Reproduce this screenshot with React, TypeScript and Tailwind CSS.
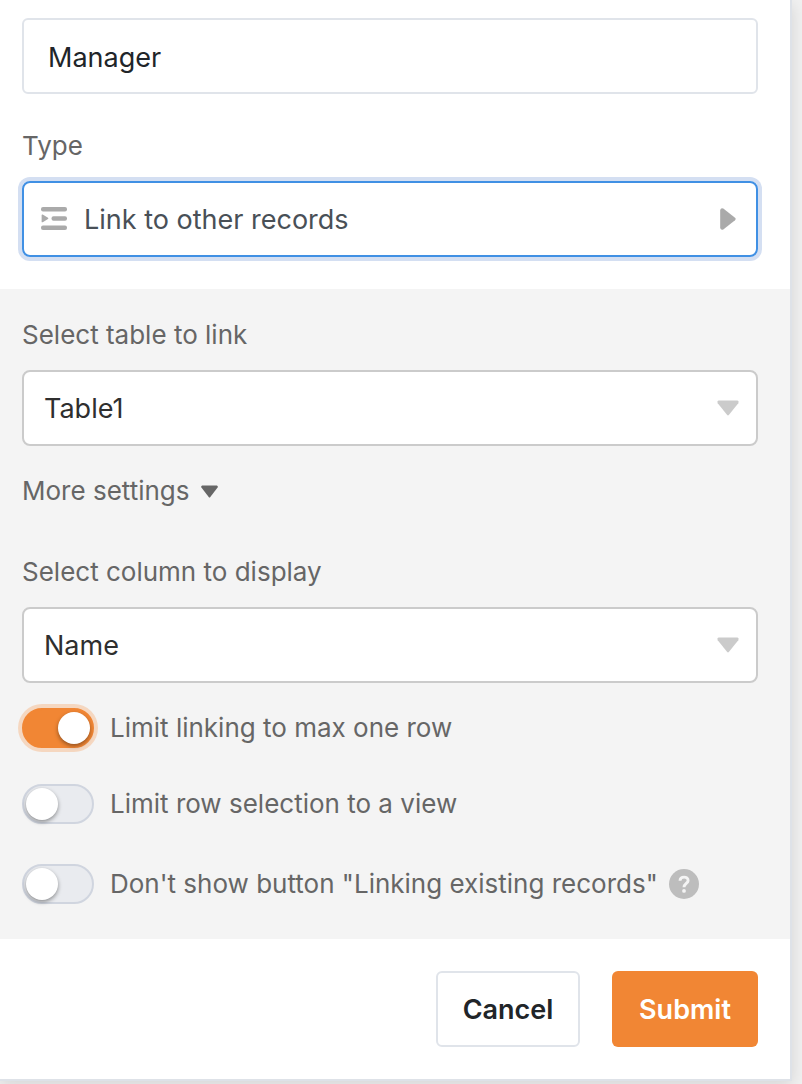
import { useState } from 'react';

function SelectField({ id, label, value }: { id: string; label: string; value: string }) {
  return (
    <div>
      <label htmlFor={id} className="block text-[26px] leading-9 text-[#666]">{label}</label>
      <div className="mt-[17px] grid items-center">
        <select
          id={id}
          defaultValue={value}
          className="col-start-1 row-start-1 h-19 w-full appearance-none rounded-lg border-2 border-[#cbcbcb] bg-white px-5 pt-0.5 text-[27px] text-[#2f2f2f] outline-none"
        >
          <option>{value}</option>
        </select>
        <svg className="pointer-events-none col-start-1 row-start-1 mr-[19px] justify-self-end" width="22" height="16" viewBox="0 0 22 16" aria-hidden="true">
          <path d="M1.600 0.400H20.400Q22.200 0.900 21.300 3.200L12 14.800Q11 16 10 14.800L0.700 3.200Q-0.200 0.900 1.600 0.400Z" fill="#cbcbcb" />
        </svg>
      </div>
    </div>
  );
}

function Toggle({ label, on, focus }: { label: string; on?: boolean; focus?: boolean }) {
  const [checked, setChecked] = useState(!!on);
  return (
    <label className="flex min-h-10 items-center gap-4 text-[26px] leading-9 text-[#666]">
      <span
        className={`relative h-10 w-18 shrink-0 rounded-full border-2 ${checked ? 'border-[#f18634] bg-[#f18634]' : 'border-[#d0d5df] bg-[#e9ebef]'} ${focus ? 'ring-4 ring-[#f5d7c0]' : ''}`}
      >
        <input
          type="checkbox"
          className="absolute inset-0 size-full cursor-pointer appearance-none"
          checked={checked}
          onChange={() => setChecked(!checked)}
        />
        <span className={`pointer-events-none absolute top-0.5 size-8 rounded-full bg-white shadow-[0_2px_4px_rgba(0,0,0,0.4)] ${checked ? 'right-0.5' : 'left-0.5'}`} />
      </span>
      {label}
    </label>
  );
}

function LinkIcon() {
  return (
    <svg width="26" height="24" viewBox="0 0 26 24" fill="#aaa" aria-hidden="true">
      <rect y="0" width="26" height="4.400" rx="2" />
      <rect x="10.500" y="9.200" width="15.500" height="4.600" rx="2" />
      <rect y="18.500" width="26" height="4.600" rx="2" />
      <path d="M0.600 8Q0.900 7.300 1.700 7.600L7 10.700Q7.800 11.400 7 12.100L1.700 15.200Q0.900 15.600 0.600 14.900Z" />
    </svg>
  );
}

export default function App() {
  return (
    <main className="overflow-hidden bg-[#f1f1f1] pr-2.5 pb-[3px] font-['Inter',sans-serif]">
      <form
        className="border-r-2 border-b-2 border-[#dee2e8] bg-white pt-[18px] shadow-[0_4px_16px_rgba(0,0,0,0.12)]"
        onSubmit={(e) => e.preventDefault()}
      >
        <div className="pr-8 pb-8 pl-[22px]">
          <input
            aria-label="Name"
            defaultValue="Manager"
            className="h-19 w-full rounded-md border-2 border-[#e0e4ea] px-6 pt-0.5 text-[27px] text-[#212529] outline-none"
          />
          <label htmlFor="type" className="mt-[34px] block text-[26px] leading-9 text-[#666]">Type</label>
          <button
            id="type"
            type="button"
            className="mt-[17px] flex h-19 w-full items-center rounded-lg border-2 border-[#4090e4] pr-5 pl-[17px] text-[27px] text-[#495057] ring-4 ring-[#d4dff2]"
          >
            <LinkIcon />
            <span className="ml-[17px] flex-1 pt-0.5 text-left">Link to other records</span>
            <svg width="16" height="22" viewBox="0 0 16 22" aria-hidden="true">
              <path d="M0.200 2Q0.800 -0.500 3.300 0.500L15 9.800Q16.400 11 15 12.200L3.300 21.500Q0.800 22.500 0.200 20Z" fill="#aaa" />
            </svg>
          </button>
        </div>
        <section className="bg-[#f4f4f4] pt-7 pr-8 pb-[35px] pl-[22px]">
          <SelectField id="table" label="Select table to link" value="Table1" />
          <button type="button" className="mt-[27px] mb-[45px] flex items-center gap-[11px] text-[26px] leading-9 text-[#666]">
            More settings
            <svg width="17" height="13" viewBox="0 0 17 13" aria-hidden="true">
              <path d="M1.200 0.500H15.800Q17.300 0.900 16.600 2.400L9.300 12Q8.500 13 7.700 12L0.400 2.400Q-0.300 0.900 1.200 0.500Z" fill="#666" />
            </svg>
          </button>
          <SelectField id="column" label="Select column to display" value="Name" />
          <div className="mt-[25px]">
            <Toggle label="Limit linking to max one row" on focus />
          </div>
          <div className="mt-9">
            <Toggle label="Limit row selection to a view" />
          </div>
          <div className="mt-10 flex items-center gap-[11px]">
            <Toggle label={'Don\'t show button "Linking existing records"'} />
            <button type="button" aria-label="Help" className="shrink-0">
              <svg width="30" height="30" viewBox="0 0 30 30" aria-hidden="true">
                <circle cx="15" cy="15" r="15" fill="#bdbdbd" />
                <path d="M11 11.800C11.200 6.800 19.200 7 19.100 11.600C19 14.300 15 14.600 15 18.200" fill="none" stroke="#f4f4f4" strokeWidth="2.900" />
                <circle cx="15" cy="21.900" r="1.900" fill="#f4f4f4" />
              </svg>
            </button>
          </div>
        </section>
        <footer className="flex justify-end gap-8 py-8 pr-8">
          <button type="button" className="h-19 min-w-36 rounded-md border-2 border-[#e0e4ea] px-6 pt-0.5 text-[27px] font-semibold text-[#212529]">Cancel</button>
          <button type="submit" className="h-19 min-w-[146px] rounded-md bg-[#f18634] px-6 pt-0.5 text-[27px] font-semibold text-white">Submit</button>
        </footer>
      </form>
    </main>
  );
}
